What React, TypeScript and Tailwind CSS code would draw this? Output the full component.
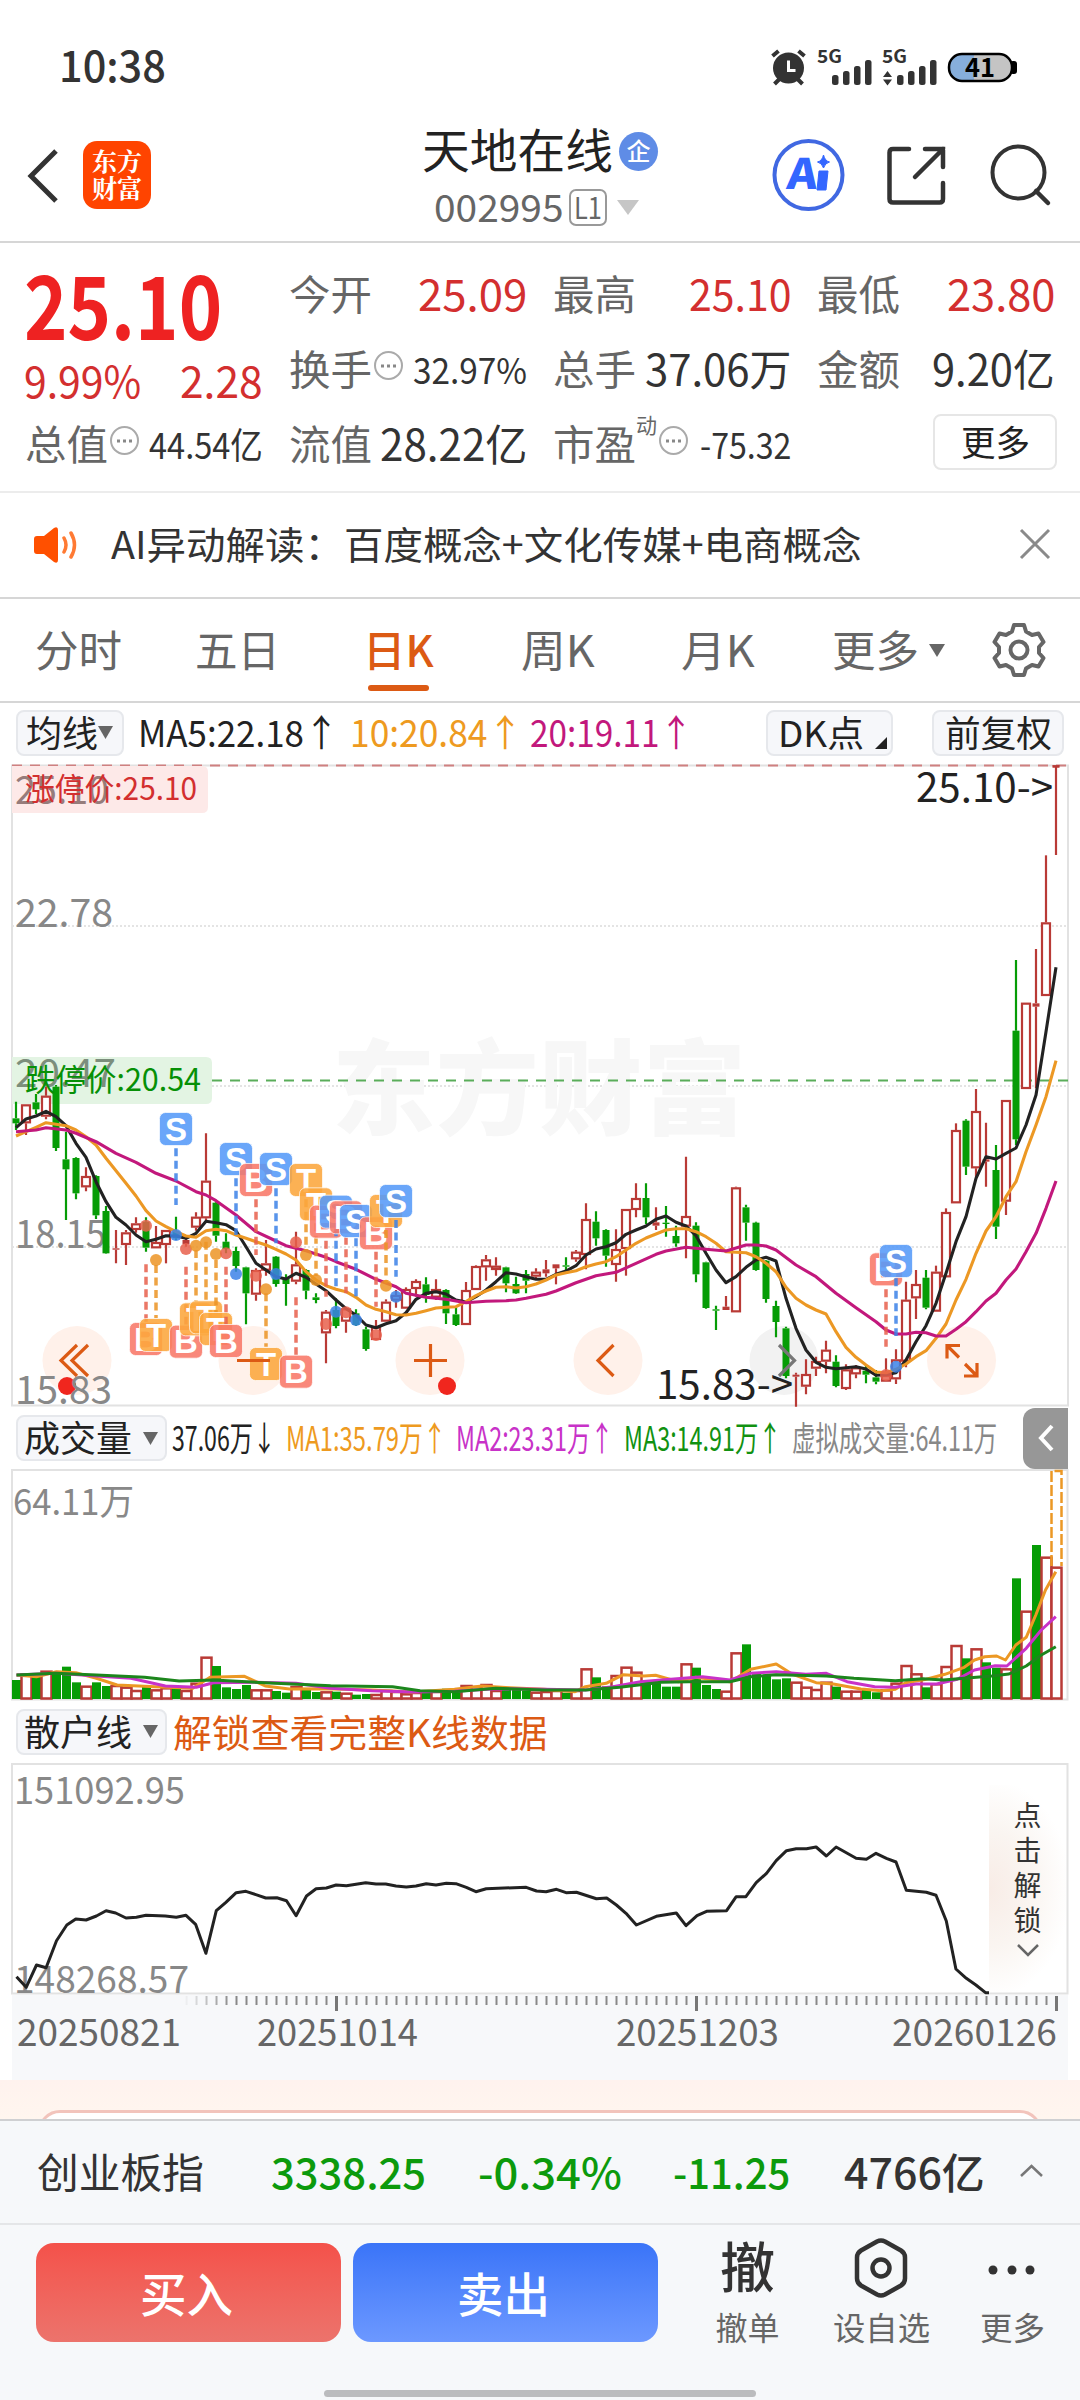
import { useLayoutEffect, useRef, type ReactNode } from "react";

type Candle = [up: number, high: number, top: number, bottom: number, low: number];

const RED = "#b93a36";
const GREEN = "#069c06";

// [up, high, body top, body bottom, low], in thirds of a pixel
const CANDLES: Candle[] = [
  [0, 65, 115, 130, 150], [1, 73, 73, 130, 165], [0, 42, 67, 88, 102], [1, 20, 47, 110, 118], [0, 15, 20, 204, 213],
  [0, 155, 238, 268, 420], [0, 232, 234, 340, 358], [1, 262, 288, 322, 334], [0, 286, 288, 406, 417], [0, 378, 393, 520, 521],
  [1, 450, 505, 509, 550], [1, 450, 457, 495, 555], [1, 412, 430, 450, 458], [0, 412, 425, 503, 515], [1, 438, 486, 505, 505],
  [1, 450, 450, 495, 550], [0, 410, 455, 475, 480], [1, 470, 480, 492, 500], [1, 397, 410, 443, 452], [1, 160, 302, 415, 420],
  [0, 366, 368, 467, 485], [0, 460, 485, 507, 520], [0, 500, 513, 558, 575], [0, 560, 562, 640, 733], [1, 565, 570, 644, 662],
  [1, 480, 550, 572, 587], [0, 528, 530, 612, 620], [0, 583, 595, 612, 677], [1, 455, 553, 605, 613], [0, 568, 570, 632, 658],
  [0, 640, 652, 660, 670], [1, 690, 695, 760, 850], [0, 655, 690, 738, 745], [1, 683, 685, 725, 758], [0, 688, 700, 735, 738],
  [0, 740, 748, 807, 812], [1, 720, 740, 780, 780], [1, 658, 665, 725, 725], [1, 630, 645, 662, 683], [1, 622, 627, 686, 686],
  [1, 598, 603, 627, 650], [0, 592, 613, 645, 668], [1, 598, 627, 653, 660], [0, 628, 630, 700, 732], [0, 680, 703, 735, 738],
  [1, 606, 630, 735, 735], [1, 556, 558, 630, 630], [1, 525, 538, 562, 602], [1, 532, 557, 570, 587], [0, 560, 562, 610, 637],
  [0, 590, 612, 640, 642], [0, 570, 582, 602, 640], [1, 565, 575, 590, 598], [1, 540, 568, 580, 590], [1, 553, 553, 565, 613],
  [0, 532, 556, 560, 570], [1, 510, 515, 538, 545], [1, 370, 417, 525, 568], [0, 394, 425, 475, 497], [0, 448, 450, 527, 560],
  [1, 448, 507, 555, 605], [1, 387, 387, 507, 587], [1, 310, 354, 390, 412], [0, 310, 354, 412, 432], [1, 382, 427, 437, 450],
  [0, 378, 428, 432, 470], [0, 437, 468, 490, 500], [1, 230, 408, 440, 535], [0, 427, 437, 583, 607], [0, 545, 547, 684, 686],
  [0, 677, 688, 692, 750], [1, 648, 680, 690, 690], [1, 320, 322, 697, 697], [0, 374, 382, 428, 482], [0, 425, 428, 570, 572],
  [0, 540, 542, 657, 668], [0, 662, 678, 726, 772], [0, 740, 745, 888, 895], [1, 878, 884, 890, 980], [1, 838, 882, 920, 943],
  [1, 830, 843, 866, 888], [1, 782, 809, 845, 880], [0, 826, 845, 918, 922], [1, 853, 868, 927, 930], [1, 855, 862, 883, 895],
  [0, 855, 872, 884, 910], [0, 870, 892, 905, 913], [1, 835, 885, 905, 905], [1, 808, 838, 898, 912], [1, 605, 659, 845, 862],
  [1, 570, 612, 655, 717], [0, 570, 593, 683, 688], [1, 557, 575, 695, 695], [1, 385, 396, 592, 592], [1, 130, 150, 370, 370],
  [0, 118, 122, 260, 285], [1, 27, 93, 265, 295], [1, 128, 238, 245, 320], [0, 195, 270, 440, 477], [1, 60, 60, 365, 405],
  [0, -360, -148, 178, 195], [1, -232, -232, 27, 27], [1, -393, -230, -220, 25], [1, -674, -473, -252, -252], [1, -944, -944, -942, -675],
];

const MA5 = [
  143, 117, 108, 94, 110, 137, 190, 232, 305, 365, 412, 435, 465, 485, 478, 467, 468, 475, 460, 424, 428, 434, 452, 500, 550,
  570, 590, 597, 580, 592, 612, 632, 660, 686, 705, 735, 743, 731, 722, 698, 658, 640, 635, 642, 660, 666, 650, 630, 605, 578,
  582, 590, 598, 598, 583, 573, 557, 525, 507, 500, 488, 463, 450, 438, 418, 408, 427, 438, 467, 520, 570, 608, 590, 562, 540,
  532, 543, 655, 745, 810, 847, 862, 866, 863, 860, 867, 886, 884, 878, 840, 785, 737, 670, 580, 485, 410, 295, 230, 237, 220,
  204, 135, 45, -145, -338,
];

const MA10 = [
  168, 155, 142, 128, 133, 137, 150, 170, 195, 235, 272, 310, 348, 392, 423, 440, 455, 468, 472, 452, 448, 452, 465, 475, 485,
  495, 508, 522, 540, 575, 600, 617, 628, 635, 652, 675, 688, 695, 704, 705, 700, 692, 684, 682, 680, 665, 647, 633, 622, 620,
  624, 620, 612, 600, 585, 578, 572, 560, 552, 545, 530, 510, 490, 474, 462, 450, 446, 446, 455, 470, 490, 515, 517, 518, 530,
  550, 575, 622, 655, 675, 690, 702, 755, 802, 832, 855, 876, 878, 868, 852, 830, 812, 775, 732, 660, 598, 520, 453, 410, 350,
  305, 215, 135, 50, -58,
];

const MA20: [number, number][] = [
  [0, 155], [2, 150], [3, 143], [5, 150], [6, 160], [8, 185], [10, 220], [12, 247], [14, 280], [16, 303], [18, 335],
  [19, 345], [20, 362], [22, 405], [24, 455], [26, 483], [27, 497], [29, 512], [31, 532], [32, 545], [34, 568], [36, 598],
  [38, 620], [39, 640], [41, 652], [43, 658], [45, 668], [47, 664], [49, 662], [50, 660], [51, 655], [53, 643], [54, 633],
  [56, 608], [58, 587], [60, 577], [62, 550], [64, 523], [65, 513], [67, 502], [69, 508], [71, 513], [73, 495], [74, 495],
  [75, 498], [76, 510], [78, 555], [80, 590], [82, 640], [84, 683], [86, 725], [87, 750], [88, 762], [89, 762], [90, 757],
  [91, 758], [92, 768], [93, 768], [94, 748], [95, 725], [96, 695], [97, 663], [98, 640], [99, 600], [100, 567], [101, 515],
  [102, 460], [103, 385], [104, 303],
];

// [type, candle index, badge centre, dash from, dash to, dot]
const MARKS: [string, number, number, number, number, number][] = [
  ["B", 13, 777, 553, 725, 437], ["T", 14, 765, 555, 715, 540], ["S", 16, 147, 205, 375, 465], ["B", 17, 785, 560, 735, 507],
  ["T", 18, 718, 510, 665, 497], ["T", 19, 712, 485, 660, 487], ["T", 20, 747, 540, 700, 522], ["B", 21, 783, 560, 735, 520],
  ["S", 22, 237, 295, 465, 582], ["B", 24, 300, 358, 525, 587], ["T", 25, 852, 640, 800, 628], ["S", 26, 267, 325, 490, 582],
  ["B", 28, 875, 652, 825, 487], ["T", 29, 300, 358, 510, 525], ["T", 30, 373, 430, 588, 600], ["B", 31, 425, 482, 650, 732],
  ["S", 32, 395, 445, 622, 695], ["B", 33, 412, 470, 640, 697], ["S", 34, 423, 475, 650, 720], ["B", 36, 460, 515, 680, 765],
  ["T", 37, 393, 450, 610, 617], ["S", 38, 363, 420, 590, 650], ["B", 87, 568, 628, 800, 885], ["S", 88, 543, 595, 768, 860],
];

const VOLUMES = [
  840, 820, 830, 812, 822, 800, 847, 857, 847, 858, 855, 860, 870, 858, 868, 862, 862, 870, 848, 770, 798, 862, 867, 855, 868,
  868, 873, 878, 858, 870, 876, 874, 875, 878, 884, 882, 882, 870, 873, 880, 876, 870, 873, 866, 875, 855, 858, 852, 870, 868,
  870, 872, 875, 873, 870, 878, 870, 805, 832, 859, 825, 800, 815, 845, 850, 860, 860, 790, 803, 855, 867, 872, 757, 733, 820,
  825, 838, 835, 845, 860, 867, 845, 860, 872, 872, 868, 877, 868, 848, 795, 820, 862, 850, 798, 735, 775, 745, 787, 803, 805,
  535, 632, 435, 470, 500,
];

const VOL_MA1: [number, number][] = [
  [24, 825], [53, 830], [82, 815], [110, 818], [140, 835], [170, 855], [225, 860], [280, 865], [305, 832], [355, 829],
  [385, 858], [420, 867], [470, 866], [540, 870], [600, 876], [660, 868], [700, 858], [740, 863], [790, 868], [835, 875],
  [850, 860], [880, 850], [905, 824], [935, 828], [952, 826], [985, 845], [1010, 832], [1040, 840], [1060, 845], [1090, 808],
  [1127, 792], [1150, 822], [1185, 848], [1210, 852], [1250, 867], [1280, 872], [1300, 868], [1315, 848], [1345, 838],
  [1372, 823], [1400, 802], [1415, 780], [1430, 770], [1447, 768], [1460, 780], [1475, 735], [1490, 712], [1504, 645],
  [1518, 570], [1533, 515],
];
const VOL_MA2: [number, number][] = [
  [24, 825], [82, 820], [140, 828], [190, 835], [240, 858], [285, 862], [310, 848], [370, 847], [430, 850], [480, 865],
  [540, 872], [600, 876], [660, 874], [720, 866], [790, 868], [850, 870], [890, 860], [930, 845], [960, 840], [1020, 830],
  [1060, 840], [1090, 820], [1127, 815], [1170, 823], [1200, 820], [1230, 845], [1270, 860], [1300, 862], [1330, 852],
  [1360, 852], [1390, 838], [1415, 810], [1445, 797], [1462, 798], [1490, 745], [1512, 690], [1533, 650],
];
const VOL_MA3: [number, number][] = [
  [24, 825], [80, 820], [140, 825], [210, 832], [260, 843], [310, 840], [400, 850], [480, 857], [570, 860], [610, 872],
  [660, 875], [720, 865], [790, 870], [850, 870], [900, 862], [960, 847], [1000, 845], [1060, 845], [1090, 830], [1127, 824],
  [1200, 828], [1240, 835], [1300, 842], [1340, 836], [1370, 840], [1400, 835], [1440, 828], [1465, 822], [1490, 798],
  [1512, 765], [1533, 740],
];
const RETAIL: [number, number][] = [
  [24, 710], [38, 742], [53, 675], [67, 683], [82, 602], [97, 555], [110, 537], [125, 540], [140, 528], [154, 512],
  [168, 519], [183, 534], [198, 532], [212, 526], [240, 528], [256, 532], [270, 526], [284, 553], [299, 640], [314, 512],
  [328, 487], [343, 458], [357, 454], [386, 474], [402, 473], [416, 482], [430, 527], [445, 468], [459, 446], [474, 444],
  [488, 435], [503, 437], [531, 428], [546, 432], [560, 432], [575, 438], [590, 441], [604, 438], [619, 431], [633, 435],
  [648, 430], [662, 431], [677, 442], [691, 455], [706, 446], [764, 442], [779, 453], [793, 455], [808, 448], [822, 458],
  [837, 457], [866, 476], [881, 474], [895, 495], [909, 520], [924, 555], [953, 529], [982, 519], [996, 557], [1012, 527],
  [1026, 514], [1055, 512], [1069, 470], [1083, 470], [1098, 428], [1113, 400], [1127, 362], [1142, 332], [1156, 326],
  [1171, 326], [1185, 321], [1200, 348], [1214, 321], [1243, 355], [1258, 358], [1272, 340], [1287, 355], [1301, 366],
  [1316, 451], [1345, 457], [1359, 466], [1374, 543], [1388, 687], [1403, 715], [1417, 735], [1431, 758], [1436, 758],
];

const cx = (i: number) => Math.round(16.2 + i * 9.996);
const py = (v: number) => 1080 + v / 3;
const join = (pts: number[][]) => pts.map((p) => p.map((n) => n.toFixed(1)).join(",")).join(" ");
const daily = (values: number[]) => join(values.map((v, i) => [cx(i), py(v)]));
const scaled = (pts: [number, number][], top: number) => join(pts.map(([x, y]) => [x / 1.452, top + y / 3]));

/** Single line of text squeezed or stretched to a fixed width. */
function Fit({ w, className = "", children }: { w: number; className?: string; children: ReactNode }) {
  const ref = useRef<HTMLSpanElement>(null);
  useLayoutEffect(() => {
    const el = ref.current;
    if (el) el.style.transform = `scaleX(${w / el.offsetWidth})`;
  }, [w]);
  return (
    <span className={`block shrink-0 whitespace-nowrap leading-none ${className}`} style={{ width: w }}>
      <span ref={ref} className="inline-block origin-left">
        {children}
      </span>
    </span>
  );
}

function Label({ x, y, w, size = 39, fill = "#888", children }: { x: number; y: number; w: number; size?: number; fill?: string; children: string }) {
  return (
    <text x={x} y={y} fontSize={size} fill={fill} textLength={w} lengthAdjust="spacingAndGlyphs">
      {children}
    </text>
  );
}

function StatusBar() {
  return (
    <div className="flex h-[134px] items-center justify-between pl-[59px] pr-[61px]">
      <Fit w={107} className="-mt-[8px] text-[43px] font-medium text-[#333]">10:38</Fit>
      <svg width="250" height="50" viewBox="770 42 250 50" fill="#333">
        <circle cx="789.5" cy="68" r="15.5" />
        <path d="M773.500 56l6-5M805.500 56l-6-5M775.500 84l5-5M803.500 84l-5-5" stroke="#333" strokeWidth="4" />
        <path d="M789.500 60.500v10h7" fill="none" stroke="#fff" strokeWidth="3" />
        <text x="818" y="62.500" fontSize="18" fontWeight="700" textLength="25" lengthAdjust="spacingAndGlyphs">5G</text>
        <text x="883" y="62.500" fontSize="18" fontWeight="700" textLength="25" lengthAdjust="spacingAndGlyphs">5G</text>
        {[833, 898].map((x) => (
          <g key={x}>
            <rect x={x} y="75" width="6.500" height="10" rx="2.500" />
            <rect x={x + 11} y="71" width="6.500" height="14" rx="2.500" />
            <rect x={x + 22} y="66" width="6.500" height="19" rx="2.500" />
            <rect x={x + 33} y="60" width="6.500" height="25" rx="2.500" />
          </g>
        ))}
        <path d="M884 77l4.500-6 4.500 6zM884 79.500l4.500 6 4.500-6z" />
        <rect x="1011" y="61" width="7" height="13" rx="3" fill="#000" />
        <rect x="950" y="54" width="63" height="27" rx="13" fill="#c4c4c4" />
        <path d="M975 54h-12a13.500 13.500 0 0 0 0 27h12z" fill="#86aedb" />
        <rect x="950" y="54" width="63" height="27" rx="13" fill="none" stroke="#000" strokeWidth="2.500" />
        <text x="966" y="77" fontSize="26" fontWeight="700" fill="#000" textLength="30" lengthAdjust="spacingAndGlyphs">41</text>
      </svg>
    </div>
  );
}

function Header() {
  return (
    <div className="flex h-[109px] items-start border-b-2 border-[#d6d6d6] px-[26px]">
      <svg className="mt-[14px]" width="32" height="56" viewBox="0 0 32 56" fill="none" stroke="#333" strokeWidth="5">
        <path d="M30 3L5 28l25 25" />
      </svg>
      <div className="ml-[25px] mt-[7px] flex h-[68px] w-[68px] flex-col items-center justify-center gap-[2px] rounded-[14px] bg-[#ff4400] pb-[3px] font-['Noto_Serif_CJK_SC','Noto_Sans_CJK_SC',serif] text-[25px] font-bold leading-none text-white">
        <span>东方</span>
        <span>财富</span>
      </div>
      <div className="ml-[271px] w-[240px]">
        <div className="flex items-start">
          <Fit w={191} className="-mt-[10px] text-[47px] text-[#222]">天地在线</Fit>
          <span className="-mt-[2px] ml-[6px] flex h-[39px] w-[39px] items-center justify-center rounded-full bg-[#5f8ce6] pb-[3px] text-[24px] font-medium leading-none text-white">
            企
          </span>
        </div>
        <div className="flex items-center pl-[12px] pt-[18px]">
          <Fit w={130} className="-mt-[3px] text-[38px] text-[#666]">002995</Fit>
          <span className="ml-[5px] flex h-[37px] w-[38px] items-center justify-center rounded-[7px] border-2 border-[#999]">
            <Fit w={28} className="-mt-[3px] text-[30px] text-[#666]">L1</Fit>
          </span>
          <svg className="ml-[10px]" width="22" height="15"><path d="M0 0h22L11 15z" fill="#c6c6c6" /></svg>
        </div>
      </div>
      <svg className="ml-[108px] mt-[2px] shrink-0" width="284" height="76" viewBox="770 136 284 76" fill="none" stroke="#333" strokeWidth="4.500">
        <circle cx="808.500" cy="175" r="34" stroke="#4068e2" strokeWidth="4" />
        <g transform="translate(789 189) skewX(-6)">
          <text x="-3" y="0" fontSize="42" fontWeight="900" fill="#3366ff" stroke="none" textLength="30" lengthAdjust="spacingAndGlyphs">A</text>
        </g>
        <path d="M819 171h9l-2 19h-9zM823.500 155q1.500 6 6 7-4.500 1-6 6-1.500-5-6-6 4.500-1 6-7z" fill="#3366ff" stroke="#3366ff" strokeWidth="1" />
        <path d="M909 149h-16q-3.500 0-3.500 3.500V199q0 3.500 3.500 3.500h46.500q3.500 0 3.500-3.500V183M925 149h18v18M943 149l-28 28" strokeLinecap="round" />
        <circle cx="1018.500" cy="172.500" r="26" strokeWidth="4" />
        <path d="M1036 191l12 12" strokeLinecap="round" />
      </svg>
    </div>
  );
}

function Info() {
  return (
    <svg className="-mt-[5px] ml-[1px] shrink-0" width="31" height="31" viewBox="0 0 31 31">
      <circle cx="15.500" cy="15.500" r="13.500" fill="none" stroke="#aaa" strokeWidth="2" />
      <path d="M8 14.500h3v3h-3zM14 14.500h3v3h-3zM20 14.500h3v3h-3z" fill="#888" />
    </svg>
  );
}

function Cell({ label, value, w, info, small, red, sup }: { label: string; value: string; w: number; info?: boolean; small?: boolean; red?: boolean; sup?: string }) {
  return (
    <div className="-ml-[1px] flex h-[75px] items-center pb-[4px]">
      <Fit w={83} className="text-[41px] text-[#666]">{label}</Fit>
      {sup && <span className="-mt-[37px] w-[21px] text-[21px] leading-none text-[#666]">{sup}</span>}
      {info && <Info />}
      <Fit w={w} className={`ml-auto ${small ? "text-[36px]" : "text-[43px]"} ${red ? "text-[#d32f2f]" : "text-[#333]"}`}>{value}</Fit>
    </div>
  );
}

function Quote() {
  return (
    <div className="grid h-[250px] grid-cols-[237px_237px_237px_237px] content-start gap-x-[27px] border-b-2 border-[#ececec] pl-[26px] pt-[14px]">
      <div className="row-span-2 h-[150px] text-[#d32f2f]">
        <Fit w={198} className="-ml-[2px] mt-[1px] text-[88px] font-bold text-[#ee2222]">25.10</Fit>
        <div className="-ml-[2px] mt-[12px] flex justify-between">
          <Fit w={117} className="text-[43px]">9.99%</Fit>
          <Fit w={83} className="text-[43px]">2.28</Fit>
        </div>
      </div>
      <Cell label="今开" value="25.09" w={109} red />
      <Cell label="最高" value="25.10" w={102} red />
      <Cell label="最低" value="23.80" w={108} red />
      <Cell label="换手" value="32.97%" w={114} info small />
      <Cell label="总手" value="37.06万" w={146} />
      <Cell label="金额" value="9.20亿" w={123} />
      <Cell label="总值" value="44.54亿" w={114} info small />
      <Cell label="流值" value="28.22亿" w={147} />
      <Cell label="市盈" value="-75.32" w={91} info small sup="动" />
      <div className="-mr-[2px] ml-auto mt-[7px] flex h-[56px] w-[124px] items-center justify-center rounded-[8px] border-2 border-[#e6e6e6]">
        <Fit w={69} className="-mt-[4px] text-[35px] text-[#222]">更多</Fit>
      </div>
    </div>
  );
}

function Notice() {
  return (
    <div className="flex h-[106px] items-center border-b-2 border-[#d6d6d6] pl-[33px] pr-[29px]">
      <svg width="46" height="38" viewBox="0 0 46 38">
        <path d="M1 13q0-3 3-3h7l10-8q4-2 4 2v30q0 4-4 2l-10-8H4q-3 0-3-3z" fill="#ff5000" />
        <path d="M31 12q4 7 0 14M38 7q7 12 0 24" fill="none" stroke="#ff7a33" strokeWidth="3.500" strokeLinecap="round" />
      </svg>
      <Fit w={750} className="-mt-[4px] ml-[32px] text-[38px] text-[#333]">AI异动解读：百度概念+文化传媒+电商概念</Fit>
      <svg className="-mt-[2px] ml-auto" width="32" height="32" viewBox="0 0 32 32"><path d="M2 2l28 28M30 2L2 30" stroke="#8a8a8a" strokeWidth="3" /></svg>
    </div>
  );
}

function Tabs() {
  return (
    <div className="flex h-[104px] items-center border-b-2 border-[#d6d6d6] pl-[35px] text-[43px] text-[#666]">
      <Fit w={87} className="-mt-[3px]">分时</Fit>
      <Fit w={85} className="-mt-[3px] ml-[73px]">五日</Fit>
      <div className="relative -mt-[3px] ml-[83px] text-[#dc5a14]">
        <Fit w={71} className="font-medium">日K</Fit>
        <span className="absolute left-[5px] top-[58px] h-[6px] w-[61px] rounded-full bg-[#dc5a14]" />
      </div>
      <Fit w={74} className="-mt-[3px] ml-[87px]">周K</Fit>
      <Fit w={74} className="-mt-[3px] ml-[86px]">月K</Fit>
      <Fit w={87} className="-mt-[3px] ml-[77px]">更多</Fit>
      <svg className="ml-[10px]" width="16" height="13"><path d="M0 0h16L8 13z" fill="#666" /></svg>
      <svg className="-mt-[3px] ml-[46px]" width="56" height="56" viewBox="0 0 56 56" fill="none" stroke="#666" strokeWidth="4" strokeLinejoin="round">
        <path d="M23 4h10l2 6.500 6 3.500 6.500-1.500 5 8.500-4.500 5v6l4.500 5-5 8.500-6.500-1.500-6 3.500-2 6.500H23l-2-6.500-6-3.500-6.500 1.500-5-8.500 4.500-5v-6L3.500 21l5-8.500L15 14l6-3.500z" />
        <circle cx="28" cy="29" r="8.500" />
      </svg>
    </div>
  );
}

function Pill({ className = "", children }: { className?: string; children: ReactNode }) {
  return <div className={`flex h-[46px] shrink-0 items-center rounded-[8px] border-2 border-[#e6e8ec] bg-[#f6f7fa] text-[36px] text-[#222] ${className}`}>{children}</div>;
}

function Caret() {
  return <svg width="15" height="13"><path d="M0 0h15L7.500 13z" fill="#666" /></svg>;
}

function AverageRow() {
  return (
    <div className="flex h-[61px] items-center pb-[2px] pl-[16px] text-[37px]">
      <Pill className="w-[108px] pl-[8px]">
        <Fit w={72} className="-mt-[4px]">均线</Fit>
        <Caret />
      </Pill>
      <Fit w={201} className="-mt-[3px] ml-[14px] text-[#222]">MA5:22.18↑</Fit>
      <Fit w={173} className="-mt-[3px] ml-[11px] text-[#ee9a20]">10:20.84↑</Fit>
      <Fit w={163} className="-mt-[3px] ml-[7px] text-[#c2187c]">20:19.11↑</Fit>
      <Pill className="ml-[73px] w-[127px] pl-[10px]">
        <Fit w={86} className="-mt-[4px]">DK点</Fit>
        <svg className="ml-[11px] mt-[20px]" width="12" height="12"><path d="M12 0v12H0z" fill="#222" /></svg>
      </Pill>
      <Pill className="ml-[39px] w-[132px] pl-[11px]">
        <Fit w={107} className="-mt-[4px]">前复权</Fit>
      </Pill>
    </div>
  );
}

const MARK_COLORS: Record<string, [string, string]> = {
  S: ["#559af8", "#3c82e8"],
  B: ["#f87868", "#e8604c"],
  T: ["#fca63c", "#ec9424"],
};

function PriceChart() {
  return (
    <svg className="block shrink-0" width="1080" height="643" viewBox="0 764 1080 643">
      <path d="M12 926h1056M12 1086h1056M12 1247h1056" stroke="#dcdcdc" strokeWidth="1.500" strokeDasharray="2 2" />
      <path d="M12 765.500H1068V1405.500H12z" fill="none" stroke="#e2e2e2" strokeWidth="2" />
      <text x="332" y="1127" fontSize="103" fontWeight="900" fill="#f7f7f7" textLength="414">东方财富</text>
      <path d="M12 765.500h1056" stroke="#cf8080" strokeWidth="2" strokeDasharray="10 8" />
      <path d="M212 1080.500h856" stroke="#5aad5a" strokeWidth="2" strokeDasharray="10 8" />
      {[77, 253, 430, 608, 961.5].map((x) => (
        <circle key={x} cx={x} cy="1360.500" r="34.500" fill="#fff1ea" />
      ))}
      <circle cx="784" cy="1360.500" r="34.500" fill="#f2f2f2" />

      <path d="M12 766h190q6 0 6 6v35q0 6-6 6H12z" fill="#fde9e8" />
      <Label x={15} y={804} w={94} fill="#967c7b">25.10</Label>
      <Label x={25} y={800} w={172} size={31} fill="#d32f2f">涨停价:25.10</Label>
      <Label x={15} y={926.5} w={98}>22.78</Label>
      <path d="M12 1057h194q6 0 6 6v35q0 6-6 6H12z" fill="#e3f4e3" />
      <Label x={15} y={1087} w={101} fill="#7c8e7c">20.47</Label>
      <Label x={15} y={1247.500} w={91}>18.15</Label>

      {CANDLES.map(([up, high, top, bottom, low], i) => {
        const x = cx(i);
        const color = up ? RED : GREEN;
        const h = (bottom - top) / 3;
        return (
          <g key={i} stroke={color} strokeWidth="2.200">
            <path d={`M${x} ${py(high)}V${py(top)}M${x} ${py(bottom)}V${py(low)}`} />
            {up && h > 4 ? (
              <rect x={x - 4} y={py(top) + 1} width="8" height={h - 2} fill="#fff" />
            ) : (
              <rect x={x - 3.500} y={py(top)} width="7" height={Math.max(h, 1)} fill={color} stroke="none" />
            )}
          </g>
        );
      })}
      <path d="M1052.500 766.500h7" stroke={RED} strokeWidth="2.500" />
      <Label x={25} y={1091} w={176} size={31} fill="#069006">跌停价:20.54</Label>

      <g fill="none" strokeWidth="3.100" strokeLinejoin="round">
        <polyline points={daily(MA5)} stroke="#222" />
        <polyline points={daily(MA10)} stroke="#ec9824" />
        <polyline points={join(MA20.map(([i, v]) => [cx(i), py(v)]))} stroke="#c2187c" />
      </g>

      {MARKS.map(([kind, i, y, from, to, dot]) => {
        const x = cx(i);
        const [fill, line] = MARK_COLORS[kind];
        return (
          <g key={i}>
            <path d={`M${x} ${py(from)}V${py(to)}`} stroke={line} strokeWidth="3.500" strokeDasharray="8 4.500" opacity=".85" />
            <circle cx={x} cy={py(dot)} r="6" fill={line} opacity=".85" />
            <rect x={x - 16.500} y={py(y) - 16.500} width="33" height="33" rx="6" fill={fill} fillOpacity=".88" stroke="#fff" strokeOpacity=".7" />
            <text x={x} y={py(y) + 11.500} textAnchor="middle" fontSize="33" fontWeight="700" fontFamily="Liberation Sans" fill="#fff">{kind}</text>
          </g>
        );
      })}

      <g stroke="#dc5a14" strokeWidth="3.200" fill="none">
        <path d="M77 1345l-16 15.500 16 15.500M88 1345l-16 15.500 16 15.500M414 1360.500h33M430.500 1344v33M613.500 1345l-15.500 15.500 15.500 15.500" />
        <path d="M237 1360.500h33M960 1345.500h-13v13M947 1345.500l12 12M964 1376h13v-13M977 1376l-12-12" />
        <path d="M779 1345l15.500 15.500-15.500 15.500" stroke="#777" />
      </g>
      <circle cx="67" cy="1386" r="9" fill="#f0261e" />
      <circle cx="447" cy="1386" r="9" fill="#f0261e" />
      <Label x={15} y={1403.500} w={97}>15.83</Label>
      <Label x={916} y={802} w={137} size={40} fill="#222">{"25.10->"}</Label>
      <Label x={656} y={1399} w={137} size={40} fill="#222">{"15.83->"}</Label>
    </svg>
  );
}

function VolumeRow() {
  return (
    <div className="flex h-[62px] items-center pl-[16px] text-[34px]">
      <Pill className="w-[151px] pl-[6px]">
        <Fit w={108} className="-mt-[4px]">成交量</Fit>
        <span className="ml-[11px]"><Caret /></span>
      </Pill>
      <Fit w={104} className="-mt-[3px] ml-[5px] text-[#222]">37.06万↓</Fit>
      <Fit w={161} className="-mt-[3px] ml-[10px] text-[#ee9a20]">MA1:35.79万↑</Fit>
      <Fit w={158} className="-mt-[3px] ml-[9px] text-[#c832c8]">MA2:23.31万↑</Fit>
      <Fit w={158} className="-mt-[3px] ml-[10px] text-[#119111]">MA3:14.91万↑</Fit>
      <Fit w={205} className="-mt-[3px] ml-[10px] text-[#888]">虚拟成交量:64.11万</Fit>
      <div className="ml-[26px] flex h-[61px] w-[45px] items-center justify-center rounded-l-[12px] bg-[#979797]">
        <svg width="16" height="28" viewBox="0 0 16 28"><path d="M14 2L3 14l11 12" fill="none" stroke="#fff" strokeWidth="4" /></svg>
      </div>
    </div>
  );
}

const VOLUME_FLIP = [64, 97, 102];

function VolumeChart() {
  return (
    <svg className="block shrink-0" width="1080" height="232" viewBox="0 1469 1080 232">
      <path d="M12 1470H1067.500V1699.500H12z" fill="none" stroke="#e2e2e2" strokeWidth="2" />
      <Label x={13} y={1515} w={121} size={36}>64.11万</Label>
      {VOLUMES.map((v, i) => {
        const up = CANDLES[i][0] === 1 && !VOLUME_FLIP.includes(i);
        const y = 1400 + v / 3;
        return up ? (
          <rect key={i} x={cx(i) - 4.500} y={y + 1} width="10" height={1697.500 - y} fill="#fff" stroke={RED} strokeWidth="2.500" />
        ) : (
          <rect key={i} x={cx(i) - 4} y={y} width="9" height={1699 - y} fill={GREEN} />
        );
      })}
      <path d="M1051.500 1566V1471h10V1566" fill="none" stroke="#ec9824" strokeWidth="2.500" strokeDasharray="11 3" />
      <g fill="none" strokeWidth="3" strokeLinejoin="round">
        <polyline points={scaled(VOL_MA1, 1400)} stroke="#ec9824" />
        <polyline points={scaled(VOL_MA2, 1400)} stroke="#c832c8" />
        <polyline points={scaled(VOL_MA3, 1400)} stroke="#1c861c" />
      </g>
    </svg>
  );
}

function RetailChart() {
  return (
    <div className="relative h-[317px] shrink-0">
      <svg className="block" width="1080" height="317" viewBox="0 1763 1080 317">
        <defs>
          <linearGradient id="fade">
            <stop offset="0" stopColor="#f7f8fa" />
            <stop offset="1" stopColor="#f7f8fa" stopOpacity="0" />
          </linearGradient>
        </defs>
        <rect x="12" y="1995" width="1056" height="85" fill="#f7f8fa" />
        <path d="M12 1764H1067.500V1993.500H12z" fill="#fff" stroke="#e2e2e2" strokeWidth="2" />
        <Label x={14} y={1804} w={171} size={38}>151092.95</Label>
        <Label x={14} y={1992.500} w={175} size={38}>148268.57</Label>
        <polyline points={scaled(RETAIL, 1740)} fill="none" stroke="#222" strokeWidth="3" strokeLinejoin="round" />
        {Array.from({ length: 88 }, (_, k) => k + 17).map((i) => {
          const major = i === 32 || i === 68 || i === 104;
          return <path key={i} d={`M${cx(i) + 0.5} 1996v${major ? 15 : 9}`} stroke={major ? "#777" : "#888"} strokeWidth={major ? 3 : 2} />;
        })}
        <rect x="182" y="1996" width="50" height="10" fill="url(#fade)" />
        <Label x={17} y={2045.500} w={164} size={38} fill="#666">20250821</Label>
        <Label x={257} y={2045.500} w={161} size={38} fill="#666">20251014</Label>
        <Label x={616} y={2045.500} w={163} size={38} fill="#666">20251203</Label>
        <Label x={892} y={2045.500} w={165} size={38} fill="#666">20260126</Label>
      </svg>
      <div className="absolute left-[989px] top-[22px] flex h-[207px] w-[77px] flex-col items-center bg-[radial-gradient(ellipse_at_0%_50%,#f8ece6_0%,#faf5f1_40%,#fff_75%)] pt-[12px] text-[28px] leading-[35px] text-[#333]">
        <span>点</span>
        <span>击</span>
        <span>解</span>
        <span>锁</span>
        <svg className="mt-[7px]" width="22" height="13"><path d="M1 1l10 10L21 1" fill="none" stroke="#666" strokeWidth="2.500" /></svg>
      </div>
    </div>
  );
}

function RetailRow() {
  return (
    <div className="flex h-[62px] items-center pb-[1px] pl-[16px]">
      <Pill className="w-[151px] pl-[6px]">
        <Fit w={108} className="-mt-[4px]">散户线</Fit>
        <span className="ml-[11px]"><Caret /></span>
      </Pill>
      <Fit w={375} className="-mt-[2px] ml-[6px] text-[38px] text-[#dc5a14]">解锁查看完整K线数据</Fit>
    </div>
  );
}

function IndexBar() {
  return (
    <div className="flex h-[106px] items-center border-b-2 border-t-2 border-b-[#e4e6e8] border-t-[#cfd0d2] pb-[3px] pl-[37px] text-[42px] font-medium text-[#0c9a0c]">
      <Fit w={167} className="text-[41px] font-normal text-[#333]">创业板指</Fit>
      <Fit w={155} className="ml-[67px]">3338.25</Fit>
      <Fit w={144} className="ml-[52px]">-0.34%</Fit>
      <Fit w={117} className="ml-[51px]">-11.25</Fit>
      <Fit w={141} className="ml-[54px] text-[#333]">4766亿</Fit>
      <svg className="ml-[35px]" width="23" height="13"><path d="M1 12L11.500 2 22 12" fill="none" stroke="#777" strokeWidth="2.500" /></svg>
    </div>
  );
}

function ActionBar() {
  return (
    <div className="flex items-start pl-[36px] pt-[18px]">
      <button className="flex h-[99px] w-[305px] items-center justify-center rounded-[18px] bg-gradient-to-b from-[#f4514a] to-[#ec736c] pb-[3px] pr-[4px]">
        <Fit w={93} className="text-[47px] font-medium text-white">买入</Fit>
      </button>
      <button className="ml-[12px] flex h-[99px] w-[305px] items-center justify-center rounded-[18px] bg-gradient-to-b from-[#3a74f8] to-[#6c98ff] pb-[3px] pr-[4px]">
        <Fit w={93} className="text-[47px] font-medium text-white">卖出</Fit>
      </button>
      <div className="ml-[57px] flex w-[65px] flex-col items-center text-[#333]">
        <Fit w={55} className="-mt-[5px] text-[54px] font-medium">撤</Fit>
        <Fit w={64} className="mt-[18px] text-[32px] text-[#666]">撤单</Fit>
      </div>
      <div className="ml-[52px] flex w-[98px] flex-col items-center">
        <svg className="-mt-[5px]" width="54" height="60" viewBox="0 0 54 60" fill="none" stroke="#333" strokeWidth="4.500">
          <path d="M23 3.500q4-2 8 0l16 9q4 2.500 4 7v21q0 4.500-4 7l-16 9q-4 2-8 0l-16-9q-4-2.500-4-7v-21q0-4.500 4-7z" />
          <circle cx="27" cy="30" r="8.500" />
        </svg>
        <Fit w={97} className="mt-[12px] text-[32px] text-[#666]">设自选</Fit>
      </div>
      <div className="ml-[49px] flex w-[66px] flex-col items-center">
        <svg className="mt-[22px]" width="48" height="10" fill="#333">
          <circle cx="5" cy="5" r="4.500" />
          <circle cx="24" cy="5" r="4.500" />
          <circle cx="42" cy="5" r="4.500" />
        </svg>
        <Fit w={65} className="mt-[35px] text-[32px] text-[#666]">更多</Fit>
      </div>
    </div>
  );
}

export default function App() {
  return (
    <div className="flex h-[2400px] w-[1080px] flex-col overflow-hidden bg-white font-['Noto_Sans_CJK_SC',sans-serif]">
      <StatusBar />
      <Header />
      <Quote />
      <Notice />
      <Tabs />
      <AverageRow />
      <PriceChart />
      <VolumeRow />
      <VolumeChart />
      <RetailRow />
      <RetailChart />
      <div className="h-[39px] shrink-0 overflow-hidden bg-gradient-to-b from-[#fff2ee] to-[#fff6ef] px-[38px] pt-[30px]">
        <div className="h-[60px] rounded-[22px] border-[3px] border-[#f2c4bc] bg-white" />
      </div>
      <div className="flex flex-1 flex-col bg-[#f6f8fa]">
        <IndexBar />
        <ActionBar />
        <div className="mx-auto mb-[3px] mt-auto h-[7px] w-[432px] rounded-full bg-[#bbbcbe]" />
      </div>
    </div>
  );
}
